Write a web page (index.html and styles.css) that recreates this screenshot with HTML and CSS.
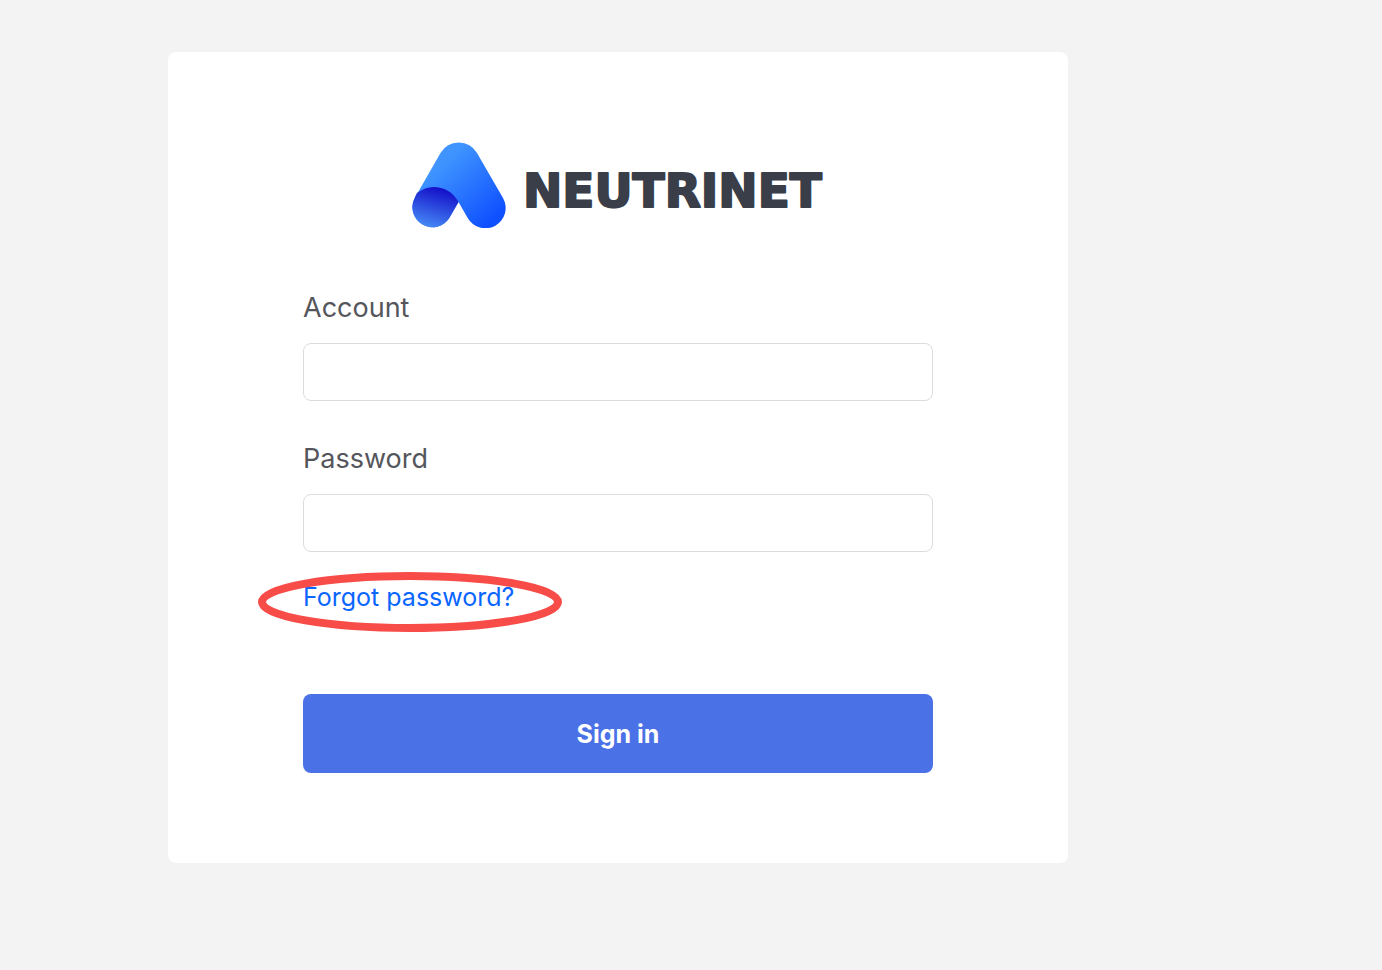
FILE: index.html
```html
<!DOCTYPE html>
<html lang="en">
<head>
    <meta charset="UTF-8">
    <meta name="viewport" content="width=device-width, initial-scale=1.0">
    <title>Neutrinet - Sign in</title>
    <link rel="stylesheet" href="styles.css">
</head>
<body>
    <main class="login-card">
        <div class="logo">
            <svg class="logo-mark" viewBox="0 0 94 86" aria-hidden="true">
                <defs>
                    <linearGradient id="body-fill" gradientUnits="userSpaceOnUse" x1="32" y1="20" x2="84" y2="76">
                        <stop offset="0" stop-color="#3f94ff"/>
                        <stop offset="1" stop-color="#0f50ff"/>
                    </linearGradient>
                    <linearGradient id="fold-fill" gradientUnits="userSpaceOnUse" x1="28" y1="48" x2="17" y2="86">
                        <stop offset="0" stop-color="#1614cb"/>
                        <stop offset="1" stop-color="#468af5"/>
                    </linearGradient>
                </defs>
                <path fill="url(#body-fill)" d="M2.7 56 L28.5 11 A21 21 0 0 1 65 11 L91 56 A20 20 0 0 1 55.7 76 L46.5 60 L37.3 76 A20 20 0 0 1 2.7 56 Z"/>
                <path fill="url(#fold-fill)" d="M2.7 56 Q3.6 53.5 5 51 Q13 45 21.5 45 C32 45 41 50 46.5 60 L37.3 76 A20 20 0 0 1 2.7 56 Z"/>
            </svg>
            <svg class="logo-name" viewBox="0 0 300 46" role="img" aria-label="Neutrinet">
                <text x="-1" y="45">NEUTRINET</text>
            </svg>
        </div>

        <form onsubmit="return false">
            <div class="field">
                <label for="account">Account</label>
                <input type="text" id="account" name="account">
            </div>
            <div class="field">
                <label for="password">Password</label>
                <input type="password" id="password" name="password">
            </div>
            <div class="forgot">
                <a href="#">Forgot password?</a>
                <svg class="ring" viewBox="0 0 304 60" aria-hidden="true">
                    <ellipse cx="152" cy="30" rx="148" ry="26"/>
                </svg>
            </div>
            <button type="submit">Sign in</button>
        </form>
    </main>
</body>
</html>
```
FILE: styles.css
```css
* {
    box-sizing: border-box;
}

body {
    margin: 0;
    padding: 52px 168px;
    background-color: #f3f3f3;
    font-family: Inter, "Liberation Sans", sans-serif;
}

.login-card {
    max-width: 900px;
    padding: 90px 135px;
    background-color: #fff;
    border-radius: 8px;
}

.logo {
    display: flex;
    justify-content: center;
    align-items: center;
    gap: 18px;
    margin-bottom: 60px;
}

.logo-mark {
    width: 94px;
    height: 86px;
}

.logo-name {
    width: 300px;
    height: 46px;
    overflow: visible;
}

/* the stroke rounds off the letter corners */
.logo-name text {
    font-family: "DejaVu Sans", sans-serif;
    font-size: 47px;
    font-weight: 700;
    fill: #393e48;
    stroke: #393e48;
    stroke-width: 2px;
    stroke-linejoin: round;
}

form {
    display: flex;
    flex-direction: column;
}

.field {
    display: flex;
    flex-direction: column;
    gap: 15px;
    margin-bottom: 38px;
}

.field + .forgot {
    margin-top: -8px;
}

label {
    font-size: 27px;
    line-height: 40px;
    color: #55565c;
}

input {
    width: 100%;
    height: 58px;
    padding: 0 16px;
    border: 1px solid #dcdcdf;
    border-radius: 8px;
    background-color: #fff;
    font-family: inherit;
    font-size: 27px;
}

.forgot {
    position: relative;
    align-self: flex-start;
    margin-bottom: 82px;
    font-size: 25px;
    line-height: 30px;
}

.forgot a {
    color: #0a66ff;
    text-decoration: none;
}

/* red ring around the link */
.ring {
    position: absolute;
    top: -10px;
    left: -45px;
    width: 304px;
    height: 60px;
    fill: none;
    stroke: #f74c48;
    stroke-width: 8px;
    pointer-events: none;
}

button {
    height: 79px;
    border: none;
    border-radius: 8px;
    background-color: #4a72e6;
    color: #fff;
    font-family: inherit;
    font-size: 25px;
    font-weight: 700;
    cursor: pointer;
}

button:hover {
    background-color: #3d65d8;
}
```
